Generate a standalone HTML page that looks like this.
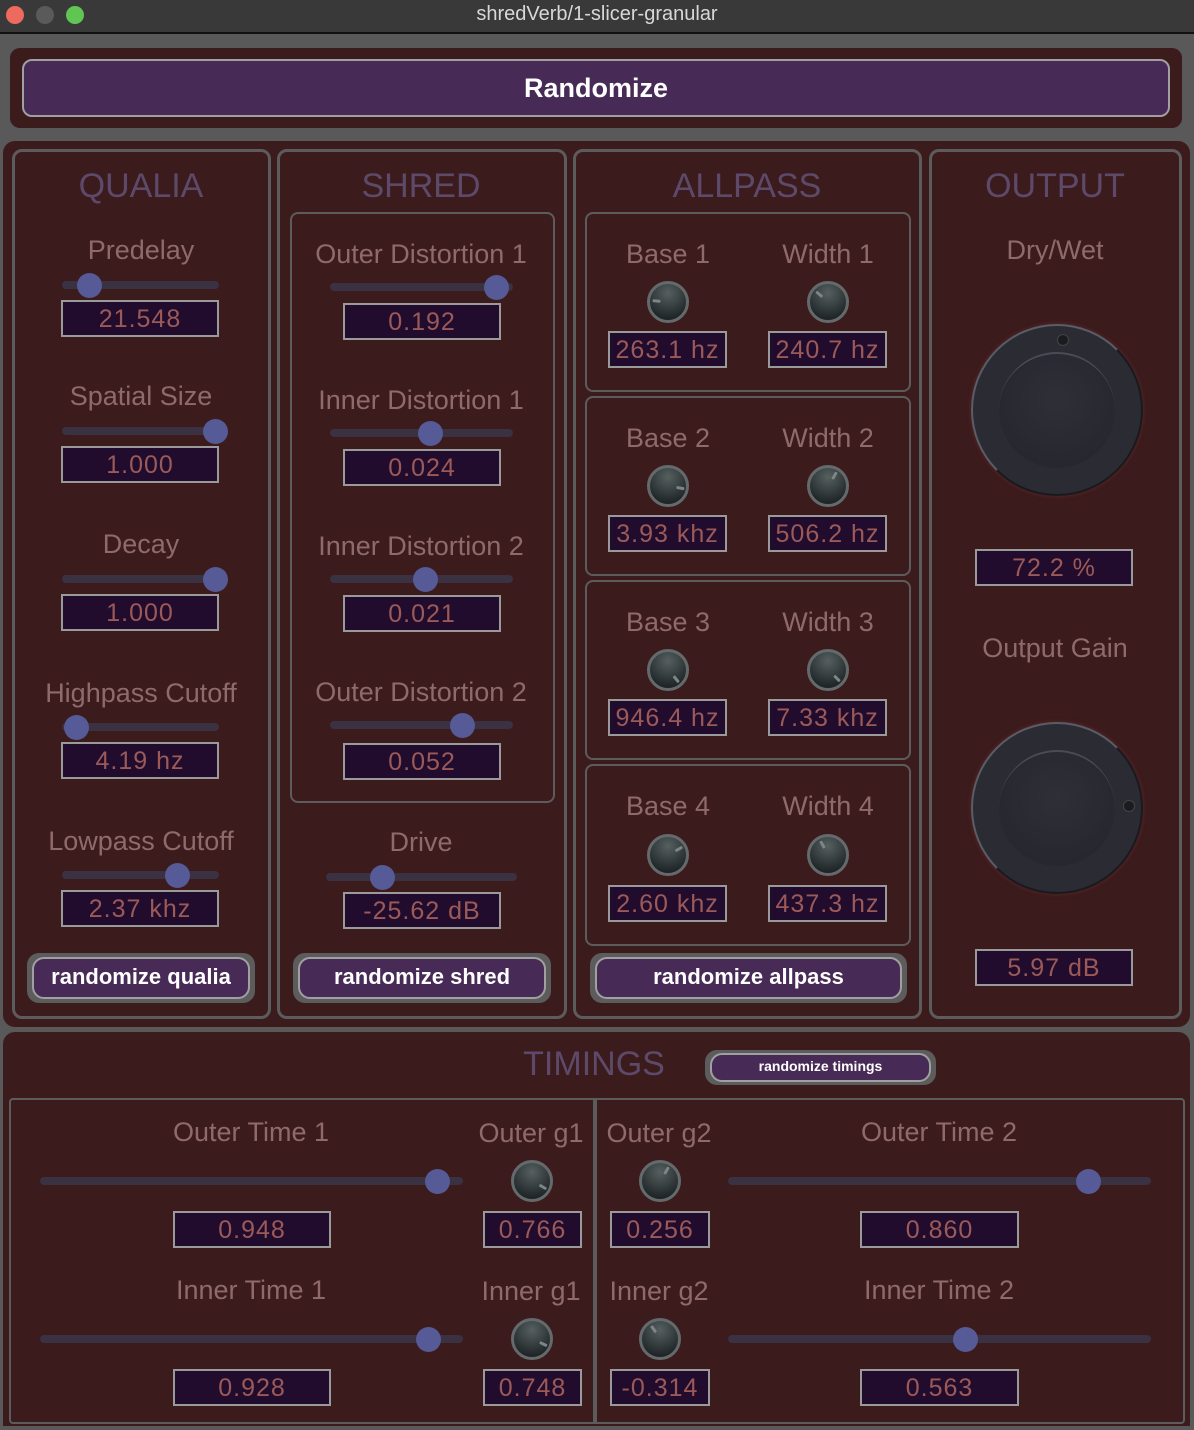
<!DOCTYPE html>
<html><head><meta charset="utf-8"><style>
*{box-sizing:border-box;margin:0;padding:0}
body{width:1194px;height:1430px;background:#595959;position:relative;overflow:hidden;font-family:"Liberation Sans","DejaVu Sans",sans-serif}
.a{position:absolute}
.l{position:absolute;width:300px;text-align:center;font-size:27px;color:#8f6a6a;line-height:30px;white-space:nowrap}
.h{position:absolute;width:300px;text-align:center;font-size:34px;color:#5d4a6a;line-height:40px}
.v{position:absolute;background:#220c2d;border:2px solid #9a9a9a;color:#9b5a58;font-size:25px;text-align:center;height:37px;line-height:35px;letter-spacing:1px}
.s{position:absolute;height:8px;border-radius:4px;background:#3a3142}
.t{position:absolute;width:25px;height:25px;border-radius:50%;background:#565a96;top:-8.5px;margin-left:-12.5px}
.k{position:absolute;width:42px;height:42px;border-radius:50%;border:3px solid #646a6c;background:radial-gradient(circle at 50% 25%,#56605f,#1e2427 80%)}
.k i{position:absolute;left:16.5px;top:2px;width:3px;height:8px;background:#7d8587;border-radius:1px;transform-origin:1.5px 16px}
.p{position:absolute;border:3px solid #5c5c5c;border-radius:10px;background:#3c1b1d}
.b{position:absolute;background:#5c5c5c;border-radius:12px}
.b div{position:absolute;left:5px;top:4px;right:5px;bottom:4px;background:#472a55;border:2px solid #a0a0a0;border-radius:12px;color:#fff;font-size:22px;text-align:center;font-weight:bold}
.bk{position:absolute;width:172px;height:172px;border-radius:50%;background:#2a2b33;border:2px solid #1a1a1e;box-shadow:0 0 4px #5a2a2a}
.bk .in{position:absolute;left:26px;top:26px;width:116px;height:116px;border-radius:50%;background:radial-gradient(circle at 50% 40%,#2e2f37,#24252c);border-top:2px solid #4a4c55}
</style></head><body>
<div class="a" style="left:0;top:0;width:1194px;height:34px;background:#393939;border-bottom:2px solid #111"></div>
<div class="a" style="left:6px;top:6px;width:18px;height:18px;border-radius:50%;background:#ed6a5e"></div>
<div class="a" style="left:36px;top:6px;width:18px;height:18px;border-radius:50%;background:#5a5a5a"></div>
<div class="a" style="left:66px;top:6px;width:18px;height:18px;border-radius:50%;background:#61c554"></div>
<div class="a" style="left:0;top:3px;width:1194px;text-align:center;color:#d8d8d8;font-size:20px">shredVerb/1-slicer-granular</div>

<div class="a" style="left:10px;top:48px;width:1172px;height:80px;background:#3c1b1d;border-radius:10px"></div>
<div class="a" style="left:22px;top:59px;width:1148px;height:58px;background:#472a55;border:2px solid #a0a0a0;border-radius:10px;color:#fff;font-size:27px;text-align:center;line-height:54px;font-weight:bold">Randomize</div>

<div class="a" style="left:3px;top:141px;width:1187px;height:886px;background:#3c1b1d;border-radius:12px"></div>
<div class="p" style="left:12px;top:149px;width:259px;height:870px"></div>
<div class="p" style="left:277px;top:149px;width:290px;height:870px"></div>
<div class="p" style="left:573px;top:149px;width:349px;height:870px"></div>
<div class="p" style="left:929px;top:149px;width:253px;height:870px"></div>

<div class="h" style="left:-9px;top:166px">QUALIA</div>
<div class="h" style="left:271px;top:166px">SHRED</div>
<div class="h" style="left:597px;top:166px">ALLPASS</div>
<div class="h" style="left:905px;top:166px">OUTPUT</div>

<div class="l" style="left:-9px;top:235px">Predelay</div>
<div class="s" style="left:62px;top:281px;width:157px"><div class="t" style="left:27px"></div></div>
<div class="v" style="left:61px;top:300px;width:158px">21.548</div>
<div class="l" style="left:-9px;top:381px">Spatial Size</div>
<div class="s" style="left:62px;top:427px;width:157px"><div class="t" style="left:153px"></div></div>
<div class="v" style="left:61px;top:446px;width:158px">1.000</div>
<div class="l" style="left:-9px;top:529px">Decay</div>
<div class="s" style="left:62px;top:575px;width:157px"><div class="t" style="left:153px"></div></div>
<div class="v" style="left:61px;top:594px;width:158px">1.000</div>
<div class="l" style="left:-9px;top:678px">Highpass Cutoff</div>
<div class="s" style="left:62px;top:723px;width:157px"><div class="t" style="left:14px"></div></div>
<div class="v" style="left:61px;top:742px;width:158px">4.19 hz</div>
<div class="l" style="left:-9px;top:826px">Lowpass Cutoff</div>
<div class="s" style="left:62px;top:871px;width:157px"><div class="t" style="left:115px"></div></div>
<div class="v" style="left:61px;top:890px;width:158px">2.37 khz</div>
<div class="b" style="left:27px;top:953px;width:228px;height:50px"><div style="line-height:36px">randomize qualia</div></div>

<div class="a" style="left:290px;top:212px;width:265px;height:591px;border:2px solid #5c5c5c;border-radius:8px"></div>
<div class="l" style="left:271px;top:239px">Outer Distortion 1</div>
<div class="s" style="left:330px;top:283px;width:183px"><div class="t" style="left:166px"></div></div>
<div class="v" style="left:343px;top:303px;width:158px">0.192</div>
<div class="l" style="left:271px;top:385px">Inner Distortion 1</div>
<div class="s" style="left:330px;top:429px;width:183px"><div class="t" style="left:100px"></div></div>
<div class="v" style="left:343px;top:449px;width:158px">0.024</div>
<div class="l" style="left:271px;top:531px">Inner Distortion 2</div>
<div class="s" style="left:330px;top:575px;width:183px"><div class="t" style="left:95px"></div></div>
<div class="v" style="left:343px;top:595px;width:158px">0.021</div>
<div class="l" style="left:271px;top:677px">Outer Distortion 2</div>
<div class="s" style="left:330px;top:721px;width:183px"><div class="t" style="left:132px"></div></div>
<div class="v" style="left:343px;top:743px;width:158px">0.052</div>
<div class="l" style="left:271px;top:827px">Drive</div>
<div class="s" style="left:326px;top:873px;width:191px"><div class="t" style="left:56px"></div></div>
<div class="v" style="left:343px;top:892px;width:158px">-25.62 dB</div>
<div class="b" style="left:293px;top:953px;width:258px;height:50px"><div style="line-height:36px">randomize shred</div></div>

<div class="a" style="left:585px;top:212px;width:326px;height:180px;border:2px solid #5c5c5c;border-radius:8px"></div>
<div class="a" style="left:585px;top:396px;width:326px;height:180px;border:2px solid #5c5c5c;border-radius:8px"></div>
<div class="a" style="left:585px;top:580px;width:326px;height:180px;border:2px solid #5c5c5c;border-radius:8px"></div>
<div class="a" style="left:585px;top:764px;width:326px;height:182px;border:2px solid #5c5c5c;border-radius:8px"></div>

<div class="l" style="left:518px;top:239px">Base 1</div><div class="l" style="left:678px;top:239px">Width 1</div>
<div class="k" style="left:647px;top:281px"><i style="transform:rotate(-85deg)"></i></div>
<div class="k" style="left:807px;top:281px"><i style="transform:rotate(-50deg)"></i></div>
<div class="v" style="left:608px;top:331px;width:119px">263.1 hz</div><div class="v" style="left:768px;top:331px;width:119px">240.7 hz</div>

<div class="l" style="left:518px;top:423px">Base 2</div><div class="l" style="left:678px;top:423px">Width 2</div>
<div class="k" style="left:647px;top:465px"><i style="transform:rotate(100deg)"></i></div>
<div class="k" style="left:807px;top:465px"><i style="transform:rotate(30deg)"></i></div>
<div class="v" style="left:608px;top:515px;width:119px">3.93 khz</div><div class="v" style="left:768px;top:515px;width:119px">506.2 hz</div>

<div class="l" style="left:518px;top:607px">Base 3</div><div class="l" style="left:678px;top:607px">Width 3</div>
<div class="k" style="left:647px;top:649px"><i style="transform:rotate(140deg)"></i></div>
<div class="k" style="left:807px;top:649px"><i style="transform:rotate(135deg)"></i></div>
<div class="v" style="left:608px;top:699px;width:119px">946.4 hz</div><div class="v" style="left:768px;top:699px;width:119px">7.33 khz</div>

<div class="l" style="left:518px;top:791px">Base 4</div><div class="l" style="left:678px;top:791px">Width 4</div>
<div class="k" style="left:647px;top:834px"><i style="transform:rotate(60deg)"></i></div>
<div class="k" style="left:807px;top:834px"><i style="transform:rotate(-30deg)"></i></div>
<div class="v" style="left:608px;top:885px;width:119px">2.60 khz</div><div class="v" style="left:768px;top:885px;width:119px">437.3 hz</div>
<div class="b" style="left:590px;top:953px;width:317px;height:50px"><div style="line-height:36px">randomize allpass</div></div>

<div class="l" style="left:905px;top:235px">Dry/Wet</div>
<div class="bk" style="left:971px;top:324px;border-top-color:#5a5c66;border-left-color:#5a5c66"><div class="in"></div><div class="a" style="left:84px;top:8px;width:12px;height:12px;border-radius:50%;background:#1a1b20;border:1px solid #444"></div></div>
<div class="v" style="left:975px;top:549px;width:158px">72.2 %</div>
<div class="l" style="left:905px;top:633px">Output Gain</div>
<div class="bk" style="left:971px;top:722px;border-top-color:#5a5c66;border-left-color:#5a5c66"><div class="in"></div><div class="a" style="left:150px;top:76px;width:12px;height:12px;border-radius:50%;background:#1a1b20;border:1px solid #444"></div></div>
<div class="v" style="left:975px;top:949px;width:158px">5.97 dB</div>

<div class="a" style="left:3px;top:1032px;width:1187px;height:394px;background:#3c1b1d;border-radius:12px 12px 0 0"></div>
<div class="h" style="left:444px;top:1044px">TIMINGS</div>
<div class="b" style="left:705px;top:1050px;width:231px;height:35px"><div style="font-size:14px;line-height:23px;top:3px;bottom:3px">randomize timings</div></div>
<div class="a" style="left:9px;top:1098px;width:1176px;height:326px;border:2px solid #5c5c5c;border-radius:4px"></div>
<div class="a" style="left:593px;top:1099px;width:4px;height:324px;background:#5c5c5c"></div>

<div class="l" style="left:101px;top:1117px">Outer Time 1</div>
<div class="s" style="left:40px;top:1177px;width:423px"><div class="t" style="left:397px"></div></div>
<div class="v" style="left:173px;top:1211px;width:158px">0.948</div>
<div class="l" style="left:381px;top:1118px">Outer g1</div>
<div class="k" style="left:511px;top:1160px"><i style="transform:rotate(120deg)"></i></div>
<div class="v" style="left:483px;top:1211px;width:99px">0.766</div>

<div class="l" style="left:101px;top:1275px">Inner Time 1</div>
<div class="s" style="left:40px;top:1335px;width:423px"><div class="t" style="left:388px"></div></div>
<div class="v" style="left:173px;top:1369px;width:158px">0.928</div>
<div class="l" style="left:381px;top:1276px">Inner g1</div>
<div class="k" style="left:511px;top:1318px"><i style="transform:rotate(115deg)"></i></div>
<div class="v" style="left:483px;top:1369px;width:99px">0.748</div>

<div class="l" style="left:509px;top:1118px">Outer g2</div>
<div class="k" style="left:639px;top:1160px"><i style="transform:rotate(30deg)"></i></div>
<div class="v" style="left:610px;top:1211px;width:100px">0.256</div>
<div class="l" style="left:789px;top:1117px">Outer Time 2</div>
<div class="s" style="left:728px;top:1177px;width:423px"><div class="t" style="left:360px"></div></div>
<div class="v" style="left:860px;top:1211px;width:159px">0.860</div>

<div class="l" style="left:509px;top:1276px">Inner g2</div>
<div class="k" style="left:639px;top:1318px"><i style="transform:rotate(-35deg)"></i></div>
<div class="v" style="left:610px;top:1369px;width:100px">-0.314</div>
<div class="l" style="left:789px;top:1275px">Inner Time 2</div>
<div class="s" style="left:728px;top:1335px;width:423px"><div class="t" style="left:237px"></div></div>
<div class="v" style="left:860px;top:1369px;width:159px">0.563</div>
</body></html>
